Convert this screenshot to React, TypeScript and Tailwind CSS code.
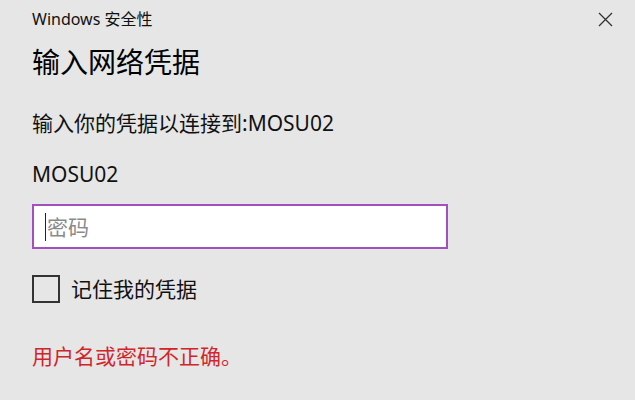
import React from 'react';

const FONT = { fontFamily: '"Noto Sans", "Noto Sans CJK SC", sans-serif' };

export default function App() {
  return (
    <div
      className="w-[635px] h-[400px] bg-[#e6e6e6] text-[#111] overflow-hidden flex flex-col"
      style={FONT}
    >
      {/* header */}
      <div className="h-[38px] flex items-center justify-between pl-[32px] pr-[22px]">
        <span className="text-[16px] leading-[38px]">Windows 安全性</span>
        <svg width="15" height="15" viewBox="0 0 15 15" className="text-[#333]">
          <path d="M1 1 L14 14 M14 1 L1 14" stroke="currentColor" strokeWidth="1.3" fill="none" />
        </svg>
      </div>

      <div className="flex flex-col pl-[32px]">
        <h1 className="h-[48px] leading-[48px] text-[28px] font-normal text-black">输入网络凭据</h1>

        <p className="mt-[22px] h-[30px] leading-[30px] text-[21px]">输入你的凭据以连接到:MOSU02</p>

        <p className="mt-[21px] h-[30px] leading-[30px] text-[21px]">MOSU02</p>

        <div className="mt-[15px] w-[416px] h-[45px] border-2 border-[#a34fc0] bg-white flex items-center pl-[11px]">
          <span className="w-[1px] h-[28px] bg-[#222]" />
          <span className="text-[21px] leading-[30px] text-[#8a8a8a] ml-[1px]">密码</span>
        </div>

        <label className="mt-[26px] h-[28px] flex items-center gap-[11px]">
          <span className="w-[28px] h-[28px] border-2 border-[#333] bg-transparent" />
          <span className="text-[21px] leading-[30px]">记住我的凭据</span>
        </label>

        <p className="mt-[38px] h-[30px] leading-[30px] text-[21px] text-[#d0262a]">用户名或密码不正确。</p>
      </div>
    </div>
  );
}
